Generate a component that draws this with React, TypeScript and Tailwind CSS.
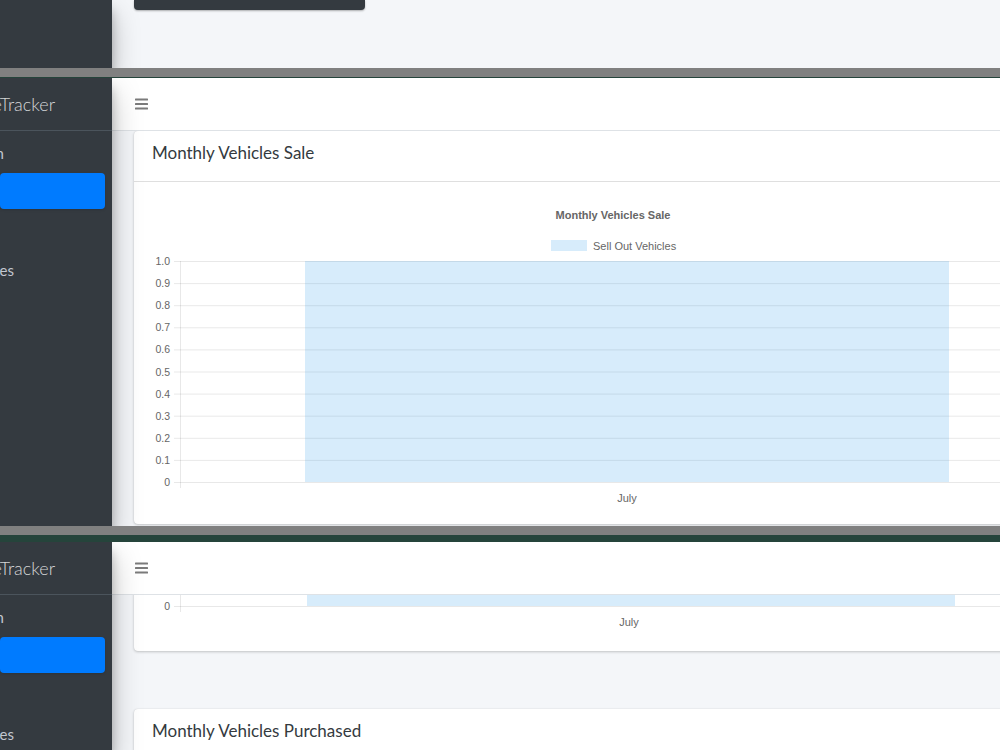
import React from "react";

const FILL = "rgba(54,162,235,0.2)";
const GRID = "rgba(0,0,0,0.09)";

function Hamburger() {
  return (
    <svg width="13" height="12" viewBox="0 0 13 12" className="block">
      <rect x="0" y="0.5" width="13" height="2" rx="0.5" fill="#7b7b7b" />
      <rect x="0" y="5" width="13" height="2" rx="0.5" fill="#7b7b7b" />
      <rect x="0" y="9.5" width="13" height="2" rx="0.5" fill="#7b7b7b" />
    </svg>
  );
}

function Sidebar({ full }: { full: boolean }) {
  return (
    <div className="relative z-10 w-[112px] shrink-0 bg-[#343a40] shadow-[0_14px_28px_rgba(0,0,0,0.25),0_10px_10px_rgba(0,0,0,0.22)] overflow-hidden">
      {full && (
        <>
          <div className="h-[53px] border-b border-[#4b545c] flex items-center justify-end pr-[57px] overflow-hidden">
            <span className="whitespace-nowrap text-[18px] font-light text-[rgba(255,255,255,0.8)] [font-family:'Lato','Noto_Sans',sans-serif]">
              VehicleTracker
            </span>
          </div>
          <div className="flex flex-col [font-family:'Lato','Noto_Sans',sans-serif]">
            <div className="mt-[12px] h-[20px] flex items-center justify-end pr-[108px] overflow-hidden">
              <span className="whitespace-nowrap text-[15px] text-[#c2c7d0]">Admin</span>
            </div>
            <div className="mt-[10px] mr-[7px] h-[36px] rounded-[4px] bg-[#007bff] shadow-[0_1px_3px_rgba(0,0,0,0.12)]" />
            <div className="mt-[51px] h-[20px] flex items-center justify-end pr-[98px] overflow-hidden">
              <span className="whitespace-nowrap text-[15px] text-[#c2c7d0]">Expenses</span>
            </div>
          </div>
        </>
      )}
    </div>
  );
}

function Navbar() {
  return (
    <div className="h-[53px] shrink-0 bg-white border-b border-[#dee2e6] flex items-center pl-[23px]">
      <Hamburger />
    </div>
  );
}

function Chart({ bodyHeight, dx }: { bodyHeight: number; dx: number }) {
  const ticks = ["1.0", "0.9", "0.8", "0.7", "0.6", "0.5", "0.4", "0.3", "0.2", "0.1", "0"];
  const top = 79;
  const step = 22.1;
  return (
    <svg width="958" height={bodyHeight} className="block">
      <g fontFamily="'Liberation Sans', Arial, sans-serif" fill="#666">
        <text x={479} y={37} fontSize="11" fontWeight="bold" textAnchor="middle">
          Monthly Vehicles Sale
        </text>
        <rect x={417} y={58} width={36} height={11} fill={FILL} />
        <text x={459} y={68} fontSize="11">
          Sell Out Vehicles
        </text>
        {ticks.map((t, i) => {
          const y = top + i * step;
          return (
            <g key={t}>
              <line x1={40} x2={958} y1={y + 0.5} y2={y + 0.5} stroke={GRID} strokeWidth="1" />
              <text x={36} y={y + 4} fontSize="10.5" textAnchor="end">
                {t}
              </text>
            </g>
          );
        })}
        <line x1={46.5} x2={46.5} y1={top} y2={top + 10 * step + 6} stroke={GRID} strokeWidth="1" />
        <rect x={171 + dx} y={top} width={644 + dx * 2} height={10 * step} fill={FILL} />
        <text x={493 + dx} y={320} fontSize="11" textAnchor="middle">
          July
        </text>
      </g>
    </svg>
  );
}

function Card({ title, children, className = "" }: { title: string; children?: React.ReactNode; className?: string }) {
  return (
    <div
      className={
        "w-[958px] shrink-0 bg-white rounded-[4px] shadow-[0_0_1px_rgba(0,0,0,0.13),0_1px_3px_rgba(0,0,0,0.2)] " +
        className
      }
    >
      <div className="h-[51px] border-b border-[rgba(0,0,0,0.125)] flex items-start pt-[12px] pl-[18px]">
        <span className="text-[17px] leading-[20px] text-[#343a40] [font-family:'Lato','Noto_Sans',sans-serif]">{title}</span>
      </div>
      {children}
    </div>
  );
}

function Separator({ green }: { green: number }) {
  return (
    <div className="shrink-0">
      <div className="h-[9px] bg-[#808080]" />
      <div className="bg-[#25443b]" style={{ height: green }} />
    </div>
  );
}

export default function App() {
  return (
    <div className="w-[1000px] h-[750px] overflow-hidden flex flex-col bg-[#f4f6f9]">
      {/* strip 1 */}
      <div className="h-[68px] shrink-0 flex overflow-hidden">
        <Sidebar full={false} />
        <div className="flex-1 bg-[#f4f6f9] pl-[22px]">
          <div className="w-[231px] h-[10px] bg-[#343a40] rounded-b-[4px] shadow-[0_1px_2px_rgba(0,0,0,0.3)]" />
        </div>
      </div>
      <Separator green={1} />
      {/* strip 2 */}
      <div className="h-[448px] shrink-0 flex overflow-hidden">
        <Sidebar full={true} />
        <div className="flex-1 min-w-0 flex flex-col bg-[#f4f6f9]">
          <Navbar />
          <div className="flex-1 overflow-hidden pl-[22px] flex flex-col">
            <Card title="Monthly Vehicles Sale">
              <Chart bodyHeight={342} dx={0} />
            </Card>
          </div>
        </div>
      </div>
      <Separator green={7} />
      {/* strip 3 */}
      <div className="flex-1 flex overflow-hidden">
        <Sidebar full={true} />
        <div className="flex-1 min-w-0 flex flex-col bg-[#f4f6f9]">
          <Navbar />
          <div className="flex-1 overflow-hidden pl-[22px] flex flex-col">
            <Card title="Monthly Vehicles Sale" className="mt-[-340px]">
              <Chart bodyHeight={345} dx={2} />
            </Card>
            <Card title="Monthly Vehicles Purchased" className="mt-[58px]" />
          </div>
        </div>
      </div>
    </div>
  );
}
